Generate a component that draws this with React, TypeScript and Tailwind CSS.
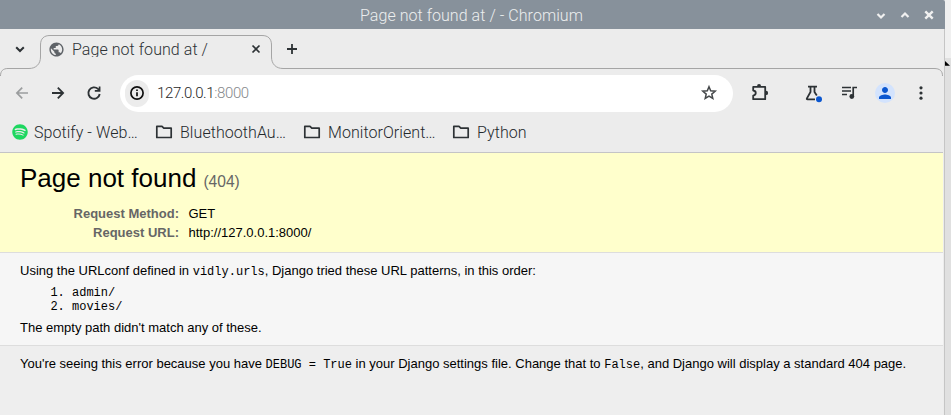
import type { ReactNode } from 'react';
import { FaSpotify } from 'react-icons/fa';
import { MdPerson, MdPublic } from 'react-icons/md';

function Glyph({ size = 20, className = '', children }: { size?: number; className?: string; children: ReactNode }) {
  return (
    <svg width={size} height={size} viewBox={`0 0 ${size} ${size}`} fill="none" stroke="currentColor" strokeWidth="2" className={`shrink-0 ${className}`}>
      {children}
    </svg>
  );
}

function TitleBar() {
  return (
    <header className="flex h-[29px] w-[945px] shrink-0 items-center rounded-tr-[2px] bg-[#87919b] text-[#f0f0f0]">
      <h1 className="ml-[360px] w-[510px] whitespace-nowrap pt-[2px] text-[16px] font-light leading-[24px] tracking-[0.05px] text-[#eceeef]">
        Page not found at / - Chromium
      </h1>
      <Glyph size={22}><path d="M7.500 10l3.500 3.500 3.500-3.500" strokeWidth="2.200" /></Glyph>
      <Glyph size={22} className="ml-[2px]"><path d="M7.500 13l3.500-3.500 3.500 3.500" strokeWidth="2.200" /></Glyph>
      <Glyph size={22} className="ml-[2px]"><path d="M7.300 7.300l7.400 7.400M14.700 7.300l-7.400 7.400" strokeWidth="2.400" /></Glyph>
    </header>
  );
}

function TabStrip() {
  return (
    <div className="relative flex h-[40px] shrink-0 items-center text-[#2d3235]">
      <svg width="943" height="48" viewBox="0 0 943 48" fill="none" className="pointer-events-none absolute left-0 top-0">
        <path d="M0.500 47C0.500 42 3 39.500 8 39.500H29C36 39.500 40.500 35 40.500 28V16C40.500 9.500 44 6.500 50 6.500H262C268 6.500 271.500 9.500 271.500 16V28C271.500 35 276 39.500 283 39.500H934C940 39.500 942.500 42 942.500 47" stroke="#a5a5a5" />
      </svg>
      <Glyph className="ml-[10px]"><path d="M6.200 8.200l3.800 3.800 3.800-3.800" strokeWidth="2" /></Glyph>
      <MdPublic size={17} className="ml-[17.500px] shrink-0 text-[#5f6368]" />
      <span className="ml-[7.500px] h-[17px] w-[174px] overflow-hidden whitespace-nowrap text-[16px] font-light leading-[20px] tracking-[0.06px] -translate-y-[1px]">Page not found at /</span>
      <Glyph><path d="M6.500 6.500l7 7M13.500 6.500l-7 7" strokeWidth="1.700" /></Glyph>
      <Glyph className="ml-[16px]"><path d="M10 5v10M5 10h10" strokeWidth="1.800" /></Glyph>
    </div>
  );
}

function Toolbar() {
  return (
    <div className="flex h-[49px] shrink-0 items-center pb-px text-[#2d3235]">
      <Glyph className="ml-[12px] text-[#9b9d9e]"><path d="M16 10H5M10.200 4.700L4.900 10l5.300 5.300" strokeWidth="1.700" /></Glyph>
      <Glyph className="ml-[16px]"><path d="M4 10h11M9.800 4.700l5.300 5.300-5.300 5.300" strokeWidth="1.800" /></Glyph>
      <Glyph className="ml-[16px]"><path d="M15.700 11A5.700 5.700 0 1 1 14 5.900L15.300 7.200" strokeWidth="1.900" /><path d="M15.600 3.500v4.400h-4.800" strokeWidth="1.700" /></Glyph>
      <div className="ml-[16px] flex h-[37px] w-[613px] items-center rounded-full bg-white">
        <span className="ml-[5px] flex h-[27px] w-[24px] items-center justify-center rounded-full bg-[#ececec] text-[#101010]">
          <Glyph size={18}><circle cx="9" cy="9" r="6.100" strokeWidth="1.700" /><path d="M9 8.200v4M9 5.400v1.500" strokeWidth="1.700" /></Glyph>
        </span>
        <span className="ml-[8px] w-[542px] whitespace-nowrap text-[15px] font-light tracking-[-0.38px] text-[#1f1f1f]">127.0.0.1<span className="text-[#85888b]">:8000</span></span>
        <Glyph className="text-[#45484a]"><path d="M10 3.700l1.700 4.100 4.500.400-3.400 2.900 1 4.400L10 13.200l-3.800 2.300 1-4.400-3.400-2.900 4.500-.4z" strokeWidth="1.500" /></Glyph>
      </div>
      <svg width="20" height="20" viewBox="0 0 20 20" fill="none" className="ml-[17px] shrink-0">
        <path d="M3.200 3.900h12v12.300h-12v-3.600c3.400-.5 3.400-4.600 0-5.100z" stroke="#2d3235" strokeWidth="1.800" strokeLinejoin="round" />
        <path d="M7 3.500a2 2.400 0 0 1 4.100 0zM16 7.700a2.100 2.200 0 0 1 0 4.400z" fill="#2d3235" />
      </svg>
      <svg width="20" height="20" viewBox="0 0 20 20" fill="none" className="ml-[33px] shrink-0">
        <path d="M5 3.700h9M7.500 4v5L3.900 15.300q-.5 1 .6 1H12M11.500 4v5l2.300 3.500" stroke="#2d3235" strokeWidth="1.800" />
        <circle cx="16" cy="16.300" r="3" fill="#0b57d0" />
      </svg>
      <svg width="20" height="20" viewBox="0 0 20 20" fill="none" className="ml-[16px] shrink-0">
        <path d="M3 4.500h9M3 8h9M3 11.500h5M14.200 14V4.500H18" stroke="#2d3235" strokeWidth="1.700" />
        <circle cx="12.800" cy="13.500" r="2.400" fill="#2d3235" />
      </svg>
      <span className="ml-[16px] flex size-[20px] items-center justify-center rounded-full bg-[#d3e3fd] text-[#0b57d0]"><MdPerson size={18} /></span>
      <svg width="20" height="20" viewBox="0 0 20 20" fill="#2d3235" className="ml-[16px] shrink-0">
        <circle cx="10" cy="4.800" r="1.600" /><circle cx="10" cy="10" r="1.600" /><circle cx="10" cy="15.200" r="1.600" />
      </svg>
    </div>
  );
}

function Folder({ name, width }: { name: string; width: string }) {
  return (
    <div className={`flex shrink-0 items-center ${width}`}>
      <svg width="18" height="16" viewBox="0 0 18 16" fill="none" className="shrink-0">
        <path d="M1.800 2.400H7l1.800 1.800H16.200V13.500H1.800z" stroke="#2d3235" strokeWidth="1.700" strokeLinejoin="round" />
      </svg>
      <span className="ml-[7px] whitespace-nowrap pt-[2px]">{name}</span>
    </div>
  );
}

function Bookmarks() {
  return (
    <nav className="flex h-[35px] shrink-0 items-center border-b border-[#c4c4c6] pb-[6px] text-[16px] font-light tracking-[0.06px] text-[#24292c]">
      <div className="ml-[12px] flex w-[143px] shrink-0 items-center">
        <FaSpotify size={16} className="shrink-0 text-[#1ed760]" />
        <span className="ml-[6px] whitespace-nowrap pt-[2px]">Spotify - Web…</span>
      </div>
      <Folder name="BluethoothAu…" width="w-[148px]" />
      <Folder name="MonitorOrient…" width="w-[149px]" />
      <Folder name="Python" width="w-[90px]" />
    </nav>
  );
}

function Code({ children }: { children: ReactNode }) {
  return <code className="font-['Liberation_Mono',monospace] text-[12px] leading-none">{children}</code>;
}

function ErrorPage() {
  return (
    <main className="flex grow flex-col whitespace-nowrap bg-[#eeeeee] font-['Liberation_Sans',Arial,sans-serif] text-[13px] text-black">
      <section className="h-[100px] shrink-0 border-b border-[#dddddd] bg-[#ffffcc] px-[20px] pt-[10px]">
        <h2 className="flex items-baseline text-[26px] leading-[30px]">Page not found <small className="ml-[7px] text-[15.600px] text-[#666666]">(404)</small></h2>
        <dl className="mt-[7px] grid grid-cols-[159px_auto] gap-x-[9.500px] leading-[19px]">
          <dt className="text-right font-bold text-[#666666]">Request Method:</dt><dd>GET</dd>
          <dt className="text-right font-bold text-[#666666]">Request URL:</dt><dd>http://127.0.0.1:8000/</dd>
        </dl>
      </section>
      <section className="h-[93px] shrink-0 border-b border-[#dddddd] bg-[#f6f6f6] px-[20px] pt-[10px]">
        <p className="leading-[16px]">Using the URLconf defined in <Code>vidly.urls</Code>, Django tried these URL patterns, in this order:</p>
        <ol className="mb-[6px] mt-[7px] list-decimal pl-[52px] font-['Liberation_Mono',monospace] text-[12px] leading-[14px]">
          <li>admin/</li><li>movies/</li>
        </ol>
        <p className="leading-[16px]">The empty path didn't match any of these.</p>
      </section>
      <section className="px-[20px] pt-[10px] leading-[16px]">
        <p>You're seeing this error because you have <Code>DEBUG = True</Code> in your Django settings file. Change that to <Code>False</Code>, and Django will display a standard 404 page.</p>
      </section>
    </main>
  );
}

export default function App() {
  return (
    <div className="flex h-[415px] w-[951px] overflow-hidden bg-[#ececec] font-[Roboto,sans-serif]">
      <div className="flex w-[945px] shrink-0 flex-col">
        <TitleBar />
        <div className="flex grow">
          <div className="flex w-[943px] shrink-0 flex-col"><TabStrip /><Toolbar /><Bookmarks /><ErrorPage /></div>
          <div className="ml-px w-px bg-[#c5c5c5]" />
        </div>
      </div>
      <aside className="flex w-[6px] flex-col bg-[#e0e0e0]">
        <div className="h-[58px] bg-[#f0f0f0]" />
        <svg width="6" height="8" viewBox="0 0 6 8"><path d="M0 3l5 4.800H0z" fill="#000" /></svg>
      </aside>
    </div>
  );
}
